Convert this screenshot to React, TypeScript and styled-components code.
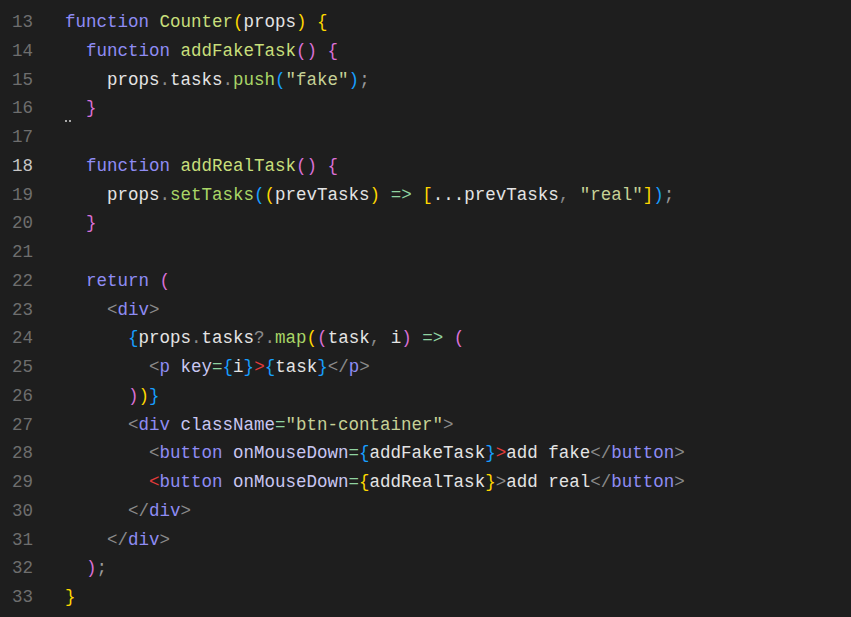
import React from "react";
import styled, { createGlobalStyle } from "styled-components";

const Global = createGlobalStyle`
  html, body { margin: 0; padding: 0; background: #1e1e1e; }
  body { width: 851px; height: 617px; overflow: hidden; }
`;

type Kind =
  | "kw" | "fn" | "id" | "dot" | "str" | "meth" | "gold" | "orch" | "blue"
  | "arrow" | "tag" | "tagp" | "attr" | "eq" | "err" | "semi" | "txt";

const colors: Record<Kind, string> = {
  kw: "#8f8cf4",
  fn: "#c8df7b",
  id: "#e4e4e4",
  dot: "#8a8a8a",
  str: "#c6d196",
  meth: "#a9d667",
  gold: "#ffd700",
  orch: "#da70d6",
  blue: "#179fff",
  arrow: "#8fd3a0",
  tag: "#8f8cf4",
  tagp: "#8a8a8a",
  attr: "#c9c7f2",
  eq: "#8fd3a0",
  err: "#e33b3b",
  semi: "#9a9a9a",
  txt: "#e4e4e4",
};

type Tok = [string, Kind];
type LineDef = { n: number; indent: number; toks: Tok[]; fold?: boolean };

const lines: LineDef[] = [
  { n: 13, indent: 0, toks: [["function", "kw"], [" ", "id"], ["Counter", "fn"], ["(", "gold"], ["props", "id"], [")", "gold"], [" ", "id"], ["{", "gold"]] },
  { n: 14, indent: 1, toks: [["function", "kw"], [" ", "id"], ["addFakeTask", "fn"], ["()", "orch"], [" ", "id"], ["{", "orch"]] },
  { n: 15, indent: 2, toks: [["props", "id"], [".", "dot"], ["tasks", "id"], [".", "dot"], ["push", "meth"], ["(", "blue"], ["\"fake\"", "str"], [")", "blue"], [";", "semi"]] },
  { n: 16, indent: 1, toks: [["}", "orch"]], fold: true },
  { n: 17, indent: 0, toks: [] },
  { n: 18, indent: 1, toks: [["function", "kw"], [" ", "id"], ["addRealTask", "fn"], ["()", "orch"], [" ", "id"], ["{", "orch"]] },
  { n: 19, indent: 2, toks: [["props", "id"], [".", "dot"], ["setTasks", "meth"], ["(", "blue"], ["(", "gold"], ["prevTasks", "id"], [")", "gold"], [" ", "id"], ["=>", "arrow"], [" ", "id"], ["[", "gold"], ["...prevTasks", "id"], [",", "dot"], [" ", "id"], ["\"real\"", "str"], ["]", "gold"], [")", "blue"], [";", "semi"]] },
  { n: 20, indent: 1, toks: [["}", "orch"]] },
  { n: 21, indent: 0, toks: [] },
  { n: 22, indent: 1, toks: [["return", "kw"], [" ", "id"], ["(", "orch"]] },
  { n: 23, indent: 2, toks: [["<", "tagp"], ["div", "tag"], [">", "tagp"]] },
  { n: 24, indent: 3, toks: [["{", "blue"], ["props", "id"], [".", "dot"], ["tasks", "id"], ["?.", "dot"], ["map", "meth"], ["(", "gold"], ["(", "orch"], ["task", "id"], [",", "dot"], [" ", "id"], ["i", "id"], [")", "orch"], [" ", "id"], ["=>", "arrow"], [" ", "id"], ["(", "orch"]] },
  { n: 25, indent: 4, toks: [["<", "tagp"], ["p", "tag"], [" ", "id"], ["key", "attr"], ["=", "eq"], ["{", "blue"], ["i", "id"], ["}", "blue"], [">", "err"], ["{", "blue"], ["task", "id"], ["}", "blue"], ["</", "tagp"], ["p", "tag"], [">", "tagp"]] },
  { n: 26, indent: 3, toks: [[")", "orch"], [")", "gold"], ["}", "blue"]] },
  { n: 27, indent: 3, toks: [["<", "tagp"], ["div", "tag"], [" ", "id"], ["className", "attr"], ["=", "eq"], ["\"btn-container\"", "str"], [">", "tagp"]] },
  { n: 28, indent: 4, toks: [["<", "tagp"], ["button", "tag"], [" ", "id"], ["onMouseDown", "attr"], ["=", "eq"], ["{", "blue"], ["addFakeTask", "id"], ["}", "blue"], [">", "err"], ["add fake", "txt"], ["</", "tagp"], ["button", "tag"], [">", "tagp"]] },
  { n: 29, indent: 4, toks: [["<", "err"], ["button", "tag"], [" ", "id"], ["onMouseDown", "attr"], ["=", "eq"], ["{", "gold"], ["addRealTask", "id"], ["}", "gold"], [">", "tagp"], ["add real", "txt"], ["</", "tagp"], ["button", "tag"], [">", "tagp"]] },
  { n: 30, indent: 3, toks: [["</", "tagp"], ["div", "tag"], [">", "tagp"]] },
  { n: 31, indent: 2, toks: [["</", "tagp"], ["div", "tag"], [">", "tagp"]] },
  { n: 32, indent: 1, toks: [[")", "orch"], [";", "semi"]] },
  { n: 33, indent: 0, toks: [["}", "gold"]] },
];

const Editor = styled.div`
  box-sizing: border-box;
  width: 851px;
  height: 617px;
  background: #1e1e1e;
  padding-top: 8px;
  font-family: "Liberation Mono", "DejaVu Sans Mono", monospace;
  font-size: 17.5px;
  display: flex;
  flex-direction: column;
`;

const Row = styled.div`
  position: relative;
  display: flex;
  height: 28.75px;
  line-height: 28.75px;
  white-space: pre;
`;

const LineNo = styled.span<{ $active: boolean }>`
  width: 33px;
  text-align: right;
  color: ${(p) => (p.$active ? "#c6c6c6" : "#6e6e6e")};
  flex: none;
`;

const Code = styled.span<{ $indent: number }>`
  padding-left: ${(p) => 32 + p.$indent * 21}px;
`;

const Token = styled.span<{ $kind: Kind }>`
  color: ${(p) => colors[p.$kind]};
`;

const Fold = styled.span`
  position: absolute;
  left: 65px;
  top: 26px;
  display: flex;
  gap: 2px;
`;

const Dot = styled.i`
  display: block;
  width: 2px;
  height: 2px;
  background: #a8a8a8;
`;

export default function App() {
  return (
    <>
      <Global />
      <Editor>
        {lines.map((l) => (
          <Row key={l.n}>
            <LineNo $active={l.n === 18}>{l.n}</LineNo>
            <Code $indent={l.indent}>
              {l.toks.map((t, i) => (
                <Token key={i} $kind={t[1]}>
                  {t[0]}
                </Token>
              ))}
            </Code>
            {l.fold && (
              <Fold>
                <Dot />
                <Dot />
              </Fold>
            )}
          </Row>
        ))}
      </Editor>
    </>
  );
}
